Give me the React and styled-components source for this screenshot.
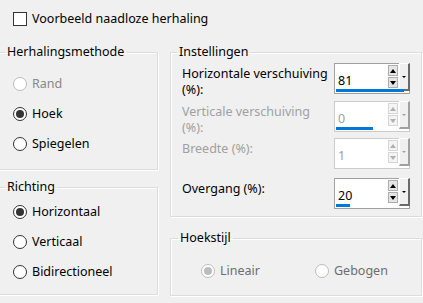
import React from 'react';
import styled, { createGlobalStyle } from 'styled-components';

const GlobalStyle = createGlobalStyle`
    html, body {
        margin: 0;
        padding: 0;
        background: #f0f0f0;
    }
    body {
        font-family: "Noto Sans", "Segoe UI", sans-serif;
        font-size: 12.5px;
        color: #000;
    }
`;

const Page = styled.div`
    width: 423px;
    height: 303px;
    overflow: hidden;
    background: #f0f0f0;
`;

const TopRow = styled.label`
    display: flex;
    gap: 5px;
    height: 44px;
    box-sizing: border-box;
    padding: 11px 0 0 13px;
    align-items: flex-start;
    line-height: 16px;
`;

const CheckBox = styled.span`
    width: 14px;
    height: 14px;
    margin-top: 1px;
    box-sizing: border-box;
    border: 1px solid #333;
    background: #fff;
`;

const Columns = styled.div`
    display: grid;
    grid-template-columns: 160px 252px;
    column-gap: 12px;
    margin-left: -2px;
`;

const Column = styled.div`
    display: flex;
    flex-direction: column;
    gap: ${p => p.gap}px;
`;

const Group = styled.fieldset`
    margin: 0;
    padding: 0;
    border: 1px solid #dcdcdc;
    box-shadow: inset 1px 1px 0 #fff, 1px 1px 0 #fff;
    height: ${p => p.h}px;
    box-sizing: border-box;
    min-width: 0;
`;

const Legend = styled.legend`
    margin-left: ${p => p.indent || 6}px;
    padding: 0 2px;
    line-height: 16px;
    color: #000;
`;

const RadioList = styled.div`
    display: flex;
    flex-direction: column;
    padding: ${p => p.top}px 0 0 14px;
`;

const RadioRow = styled.div`
    display: flex;
    align-items: center;
    gap: 5px;
    height: 30px;
    line-height: 16px;
    color: ${p => (p.disabled ? p.dim || '#888' : '#000')};
`;

const Circle = styled.span`
    width: 14px;
    height: 14px;
    box-sizing: border-box;
    border-radius: 50%;
    border: 1px solid ${p => (p.disabled ? '#bcbcbc' : '#333')};
    background: #fff;
    display: flex;
    align-items: center;
    justify-content: center;
    &::after {
        content: '';
        width: 8px;
        height: 8px;
        border-radius: 50%;
        background: ${p => (p.disabled ? '#bcbcbc' : '#333')};
        display: ${p => (p.checked ? 'block' : 'none')};
    }
`;

const Radio = ({ label, checked, disabled, dim }) => (
    <RadioRow disabled={disabled} dim={dim}>
        <Circle checked={checked} disabled={disabled} />
        <span>{label}</span>
    </RadioRow>
);

const Settings = styled.div`
    display: flex;
    flex-direction: column;
    padding: 0 11px 0 11px;
`;

const FieldRow = styled.div`
    display: flex;
    justify-content: space-between;
    align-items: flex-start;
    height: 31px;
    margin-top: ${p => p.space}px;
`;

const FieldLabel = styled.div`
    margin-top: 3px;
    line-height: 16px;
    white-space: pre-line;
    color: ${p => (p.disabled ? '#a0a0a0' : '#000')};
`;

const Control = styled.div`
    position: relative;
    display: flex;
    width: 76px;
    height: 31px;
    box-sizing: border-box;
    border: 1px solid ${p => (p.disabled ? '#cccccc' : '#a0a0a0')};
    background: #fff;
`;

const Value = styled.div`
    flex: 1;
    padding: 9px 0 0 3px;
    line-height: 16px;
    color: ${p => (p.disabled ? '#a0a0a0' : '#000')};
`;

const Arrows = styled.div`
    display: flex;
    flex-direction: column;
    gap: 1px;
    padding-top: 1px;
    width: 10px;
`;

const ArrowBtn = styled.div`
    height: 11px;
    box-sizing: border-box;
    border: 1px solid ${p => (p.disabled ? '#d6d6d6' : '#adadad')};
    background: ${p => (p.disabled ? '#f4f4f4' : '#e5e5e5')};
    display: flex;
    align-items: center;
    justify-content: center;
    &::after {
        content: '';
        border-left: 3px solid transparent;
        border-right: 3px solid transparent;
        ${p => (p.up ? 'border-bottom' : 'border-top')}: 4px solid ${p => (p.disabled ? '#b0b0b0' : '#000')};
    }
`;

const DropBtn = styled.div`
    width: 11px;
    margin: -1px -1px 2px 1px;
    box-sizing: border-box;
    background: #f0f0f0;
    border-left: 1px solid #fff;
    border-top: 1px solid #fff;
    border-right: 2px solid ${p => (p.disabled ? '#a0a0a0' : '#696969')};
    border-bottom: 2px solid ${p => (p.disabled ? '#a0a0a0' : '#696969')};
    display: flex;
    justify-content: center;
    padding-top: 12px;
    &::after {
        content: '';
        height: 0;
        border-left: 2px solid transparent;
        border-right: 2px solid transparent;
        border-top: 2px solid ${p => (p.disabled ? '#a0a0a0' : '#000')};
    }
`;

const Bar = styled.div`
    position: absolute;
    left: 1px;
    bottom: 1px;
    height: 3px;
    background: #0078d7;
`;

const Spin = ({ value, bar, disabled }) => (
    <Control disabled={disabled}>
        <Value disabled={disabled}>{value}</Value>
        <Arrows>
            <ArrowBtn up disabled={disabled} />
            <ArrowBtn disabled={disabled} />
        </Arrows>
        <DropBtn disabled={disabled} />
        {bar > 0 && <Bar style={{ width: bar }} />}
    </Control>
);

const InlineRadios = styled.div`
    display: grid;
    grid-template-columns: 114px auto;
    padding: 10px 0 0 30px;
`;

const fields = [
    { label: 'Horizontale verschuiving\n(%):', value: '81', bar: 68, space: 3 },
    { label: 'Verticale verschuiving\n(%):', value: '0', bar: 37, space: 7, disabled: true },
    { label: 'Breedte (%):', value: '1', bar: 0, space: 6, disabled: true },
    { label: 'Overgang (%):', value: '20', bar: 14, space: 9 },
];

const App = () => {
    return (
        <Page>
            <GlobalStyle />
            <TopRow>
                <CheckBox />
                <span>Voorbeeld naadloze herhaling</span>
            </TopRow>
            <Columns>
                <Column gap={9}>
                    <Group h={126}>
                        <Legend indent={6}>Herhalingsmethode</Legend>
                        <RadioList top={9}>
                            <Radio label="Rand" disabled />
                            <Radio label="Hoek" checked />
                            <Radio label="Spiegelen" />
                        </RadioList>
                    </Group>
                    <Group h={116}>
                        <Legend indent={6}>Richting</Legend>
                        <RadioList top={2}>
                            <Radio label="Horizontaal" checked />
                            <Radio label="Verticaal" />
                            <Radio label="Bidirectioneel" />
                        </RadioList>
                    </Group>
                </Column>
                <Column gap={13}>
                    <Group h={173}>
                        <Legend indent={6}>Instellingen</Legend>
                        <Settings>
                            {fields.map(f => (
                                <FieldRow key={f.label} space={f.space}>
                                    <FieldLabel disabled={f.disabled}>{f.label}</FieldLabel>
                                    <Spin value={f.value} bar={f.bar} disabled={f.disabled} />
                                </FieldRow>
                            ))}
                        </Settings>
                    </Group>
                    <Group h={66}>
                        <Legend indent={7}>Hoekstijl</Legend>
                        <InlineRadios>
                            <Radio label="Lineair" checked disabled dim="#6d6d6d" />
                            <Radio label="Gebogen" disabled dim="#6d6d6d" />
                        </InlineRadios>
                    </Group>
                </Column>
            </Columns>
        </Page>
    );
};

export default App;
